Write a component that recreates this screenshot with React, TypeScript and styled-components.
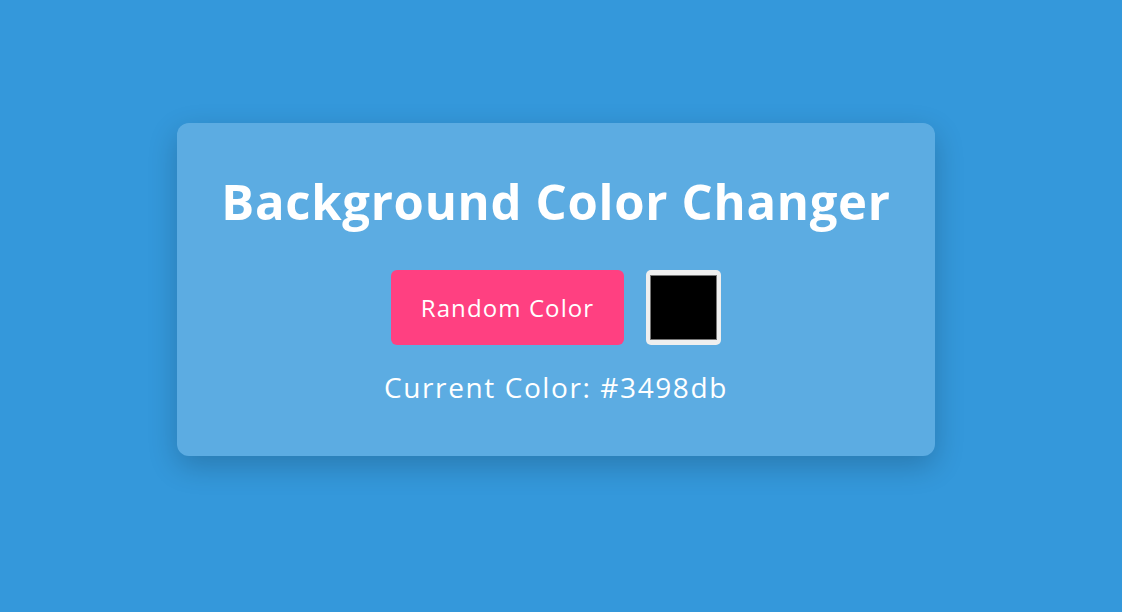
import React, { useState } from "react";
import styled, { createGlobalStyle } from "styled-components";

const GlobalStyle = createGlobalStyle`
  html, body { margin: 0; padding: 0; }
  body {
    background: #3498db;
    font-family: "Open Sans", "Liberation Sans", sans-serif;
  }
`;

const Page = styled.div`
  min-height: 100vh;
  box-sizing: border-box;
  display: flex;
  align-items: center;
  justify-content: center;
  padding: 0 10px 33px 0;
`;

const Card = styled.div`
  width: 758px;
  box-sizing: border-box;
  background: rgba(255, 255, 255, 0.2);
  border-radius: 12px;
  box-shadow: 0 10px 30px rgba(0, 0, 0, 0.2);
  padding: 48px 20px 51px;
  display: flex;
  flex-direction: column;
  align-items: center;
  color: #fff;
`;

const Title = styled.h1`
  margin: 0 0 39px;
  font-size: 49px;
  line-height: 60px;
  font-weight: 700;
  letter-spacing: 0.7px;
  color: #fff;
  white-space: nowrap;
`;

const Controls = styled.div`
  display: flex;
  align-items: center;
  gap: 22px;
`;

const Button = styled.button`
  width: 233px;
  height: 75px;
  border: none;
  border-radius: 6px;
  background: #ff4081;
  color: #fff;
  font-family: inherit;
  font-size: 24px;
  letter-spacing: 1.1px;
  cursor: pointer;
`;

const ColorInput = styled.input`
  width: 75px;
  height: 75px;
  border: none;
  border-radius: 5px;
  cursor: pointer;
`;

const Current = styled.p`
  margin: 24px 0 0;
  font-size: 28px;
  line-height: 36px;
  letter-spacing: 1.6px;
  color: #fff;
`;

export default function App() {
  const [color, setColor] = useState("#000000");
  return (
    <>
      <GlobalStyle />
      <Page>
        <Card>
          <Title>Background Color Changer</Title>
          <Controls>
            <Button>Random Color</Button>
            <ColorInput type="color" value={color} onChange={(e) => setColor(e.target.value)} />
          </Controls>
          <Current>Current Color: #3498db</Current>
        </Card>
      </Page>
    </>
  );
}
